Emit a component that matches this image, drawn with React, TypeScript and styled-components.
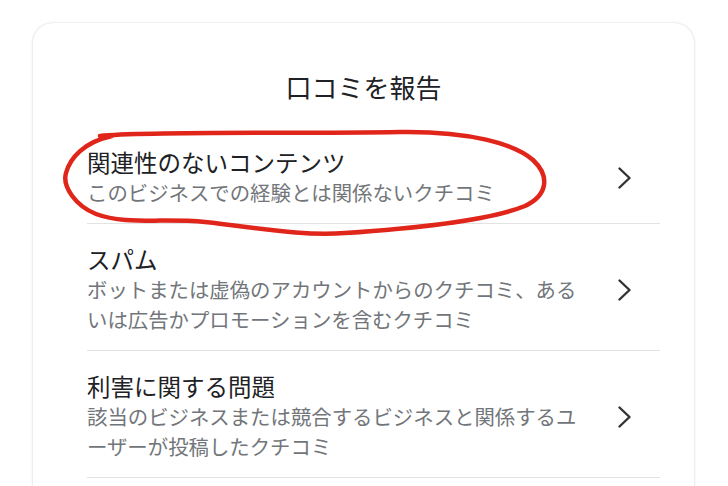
import React from 'react'
import styled, { createGlobalStyle } from 'styled-components'

const GlobalStyle = createGlobalStyle`
  html, body {
    margin: 0;
    padding: 0;
    background: #ffffff;
    overflow: hidden;
  }
  body {
    font-family: 'Noto Sans CJK JP', 'Noto Sans', sans-serif;
  }
`

const Page = styled.div`
  padding: 23px 0 0 33px;
  height: 486px;
  box-sizing: border-box;
`

const Card = styled.div`
  position: relative;
  width: 661px;
  min-height: 520px;
  background: #ffffff;
  border-radius: 20px;
  box-shadow: 0 0 2px rgba(0, 0, 0, 0.18), 0 1px 4px rgba(0, 0, 0, 0.06);
`

const Header = styled.h1`
  margin: 0;
  padding: 47px 0 23px;
  text-align: center;
  font-size: 26px;
  line-height: 34px;
  font-weight: 400;
  color: #202124;
`

const List = styled.div`
  display: flex;
  flex-direction: column;
  margin-left: 54px;
  width: 573px;
`

const Row = styled.div`
  display: flex;
  align-items: center;
  padding: 21px 29px 16px 0;
  border-bottom: 1px solid #e3e3e3;
  cursor: pointer;
`

const Texts = styled.div`
  display: flex;
  flex-direction: column;
  width: 500px;
`

const Title = styled.div`
  font-size: 23.5px;
  line-height: 29px;
  color: #202124;
`

const Sub = styled.div`
  font-size: 20.4px;
  line-height: 30px;
  color: #72767a;
`

const Chevron = styled.svg`
  margin-left: auto;
  flex-shrink: 0;
`

const Scribble = styled.svg`
  position: absolute;
  left: 0;
  top: 0;
  pointer-events: none;
  overflow: visible;
`

const items = [
  {
    title: '関連性のないコンテンツ',
    sub: 'このビジネスでの経験とは関係ないクチコミ',
  },
  {
    title: 'スパム',
    sub: 'ボットまたは虚偽のアカウントからのクチコミ、あるいは広告かプロモーションを含むクチコミ',
  },
  {
    title: '利害に関する問題',
    sub: '該当のビジネスまたは競合するビジネスと関係するユーザーが投稿したクチコミ',
  },
]

const ChevronIcon = () => (
  <Chevron width="13" height="22" viewBox="0 0 13 22">
    <path d="M1.5 1.5 L11.5 11 L1.5 20.5" fill="none" stroke="#333" strokeWidth="2.4" strokeLinecap="round" strokeLinejoin="round" />
  </Chevron>
)

export default function App() {
  return (
    <>
      <GlobalStyle />
      <Page>
        <Card>
          <Header>口コミを報告</Header>
          <List>
            {items.map((it) => (
              <Row key={it.title}>
                <Texts>
                  <Title>{it.title}</Title>
                  <Sub>{it.sub}</Sub>
                </Texts>
                <ChevronIcon />
              </Row>
            ))}
          </List>
          <Scribble width="661" height="260">
            <g transform="translate(-33,-23)">
              <path
                d="M100 136 C150 131, 300 134, 400 132 C470 131, 515 144, 533 160 C550 176, 548 195, 525 206 C490 220, 420 228, 345 233 C300 236, 260 228, 205 222 C165 218, 125 225, 96 214 C76 206, 62 187, 66 173 C70 158, 84 142, 112 136"
                fill="none"
                stroke="#e0261b"
                strokeWidth="4.5"
                strokeLinecap="round"
                strokeLinejoin="round"
              />
            </g>
          </Scribble>
        </Card>
      </Page>
    </>
  )
}
